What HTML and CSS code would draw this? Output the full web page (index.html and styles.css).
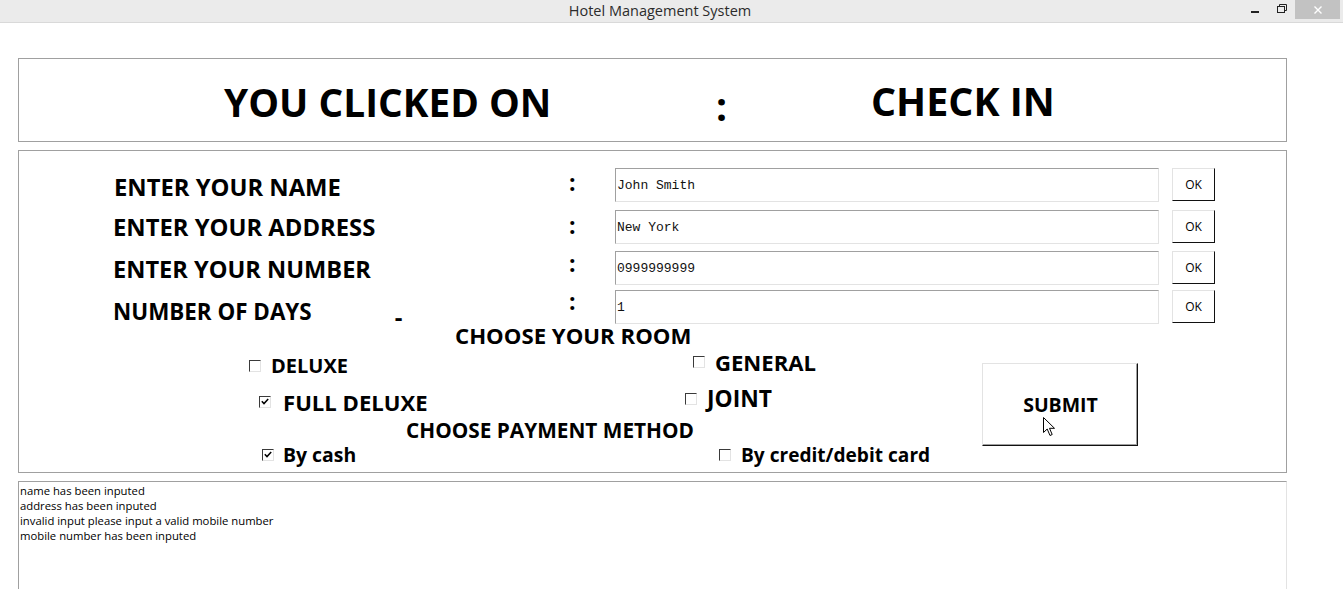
FILE: index.html
```html
<!DOCTYPE html>
<html lang="en">
<head>
<meta charset="utf-8">
<title>Hotel Management System</title>
<link rel="stylesheet" href="styles.css">
</head>
<body>
<div class="window">
  <header class="titlebar">
    <div class="title">Hotel Management System</div>
    <div class="controls">
      <span class="ctl ctl-min"><svg width="10" height="4" viewBox="0 0 10 4"><rect x="1" y="1" width="8" height="2" fill="#222"/></svg></span>
      <span class="ctl ctl-max"><svg width="12" height="11" viewBox="0 0 12 11"><rect x="1.5" y="3.5" width="7" height="6" fill="none" stroke="#222"/><path d="M3.5 3.5V1.5h7v6h-2" fill="none" stroke="#222"/></svg></span>
      <span class="ctl ctl-close"><svg width="10" height="10" viewBox="0 0 10 10"><path d="M1.5 1.5l7 7M8.5 1.5l-7 7" stroke="#fff" stroke-width="1.4"/></svg></span>
    </div>
  </header>

  <main class="content">
    <section class="banner">
      <span class="b-left">YOU CLICKED ON</span>
      <span class="b-colon">:</span>
      <span class="b-right">CHECK IN</span>
    </section>

    <section class="form">
      <div class="fields">
        <div class="field f1">
          <div class="lbl">ENTER YOUR NAME</div>
          <span class="colon">:</span>
          <div class="input">John Smith</div>
          <button class="ok">OK</button>
        </div>
        <div class="field f2">
          <div class="lbl">ENTER YOUR ADDRESS</div>
          <span class="colon">:</span>
          <div class="input">New York</div>
          <button class="ok">OK</button>
        </div>
        <div class="field f3">
          <div class="lbl">ENTER YOUR NUMBER</div>
          <span class="colon">:</span>
          <div class="input">0999999999</div>
          <button class="ok">OK</button>
        </div>
        <div class="field f4">
          <div class="lbl">NUMBER OF DAYS<span class="dash">-</span></div>
          <span class="colon">:</span>
          <div class="input">1</div>
          <button class="ok">OK</button>
        </div>
      </div>

      <div class="lower">
        <div class="choices">
          <div class="heading h-room">CHOOSE YOUR ROOM</div>
          <div class="opt-row row-a">
            <div class="opt o-deluxe"><span class="cb"></span><span class="opt-text">DELUXE</span></div>
            <div class="opt o-general"><span class="cb"></span><span class="opt-text">GENERAL</span></div>
          </div>
          <div class="opt-row row-b">
            <div class="opt o-full"><span class="cb checked"><svg width="10" height="10" viewBox="0 0 10 10"><path d="M1.8 4.2l2.2 2.4 4.2-4.6" fill="none" stroke="#000" stroke-width="1.5"/></svg></span><span class="opt-text o-gap-wide">FULL DELUXE</span></div>
            <div class="opt o-joint"><span class="cb"></span><span class="opt-text">JOINT</span></div>
          </div>
          <div class="heading h-pay">CHOOSE PAYMENT METHOD</div>
          <div class="opt-row row-pay">
            <div class="opt o-cash"><span class="cb checked"><svg width="10" height="10" viewBox="0 0 10 10"><path d="M1.8 4.2l2.2 2.4 4.2-4.6" fill="none" stroke="#000" stroke-width="1.5"/></svg></span><span class="opt-text o-gap-narrow">By cash</span></div>
            <div class="opt o-card"><span class="cb"></span><span class="opt-text">By credit/debit card</span></div>
          </div>
        </div>
        <button class="submit">SUBMIT</button>
      </div>
    </section>

    <section class="log">
      <div>name has been inputed</div>
      <div>address has been inputed</div>
      <div>invalid input please input a valid mobile number</div>
      <div>mobile number has been inputed</div>
    </section>
  </main>

  <svg class="cursor" width="13" height="20" viewBox="0 0 13 20"><path d="M0.5 0.5V15.5L4.2 12L7 18.5L9.2 17.5L6.5 11.3H11.5Z" fill="#fff" stroke="#000" stroke-width="1" stroke-linejoin="round"/></svg>
</div>
</body>
</html>
```

FILE: styles.css
```css
* { box-sizing: border-box; }
html, body { margin: 0; padding: 0; background: #fff; }
body {
  width: 1343px;
  height: 589px;
  overflow: hidden;
  font-family: "Open Sans", "Noto Sans", sans-serif;
  color: #000;
}
.window { position: relative; width: 1343px; height: 589px; }

/* title bar */
.titlebar {
  display: flex;
  height: 23px;
  background: #ebebeb;
  border-bottom: 1px solid #d9d9d9;
}
.title {
  flex: 1;
  padding-left: 79px;
  text-align: center;
  font-size: 14.5px;
  line-height: 22px;
  color: #2b2b2b;
}
.controls { display: flex; align-items: flex-start; margin-right: 3px; }
.ctl { display: flex; align-items: center; justify-content: center; height: 19px; }
.ctl-min { width: 28px; padding-top: 5px; }
.ctl-max { width: 26px; padding-bottom: 2px; }
.ctl-close { width: 45px; background: #c2c2c2; }

/* content */
.content { padding-left: 18px; }

.banner {
  margin-top: 35px;
  width: 1269px;
  height: 84px;
  border: 1px solid #a0a0a0;
  display: grid;
  grid-template-columns: 205px 494px 153px auto;
  align-items: start;
  font-weight: 700;
  font-size: 38.8px;
  line-height: 46px;
}
.b-left { grid-column: 2; margin-top: 20px; }
.b-colon { grid-column: 3; margin-top: 24px; margin-left: -2px; }
.b-right { grid-column: 4; margin-top: 19px; font-size: 39.4px; }

.form {
  margin-top: 8px;
  width: 1269px;
  height: 323px;
  border: 1px solid #a0a0a0;
}
.fields { padding-top: 17px; }
.field {
  display: grid;
  grid-template-columns: 456px 46px 544px 56px;
  padding-left: 94px;
  height: 34px;
  align-items: start;
}
.field .ok { margin-left: 13px; }
.f2 { margin-top: 8px; }
.f3 { margin-top: 7px; }
.f4 { margin-top: 5px; }

.lbl {
  font-weight: 700;
  font-size: 23.8px;
  line-height: 34px;
  white-space: nowrap;
  display: flex;
  align-items: flex-start;
}
.f1 .lbl { margin-top: 2px; padding-left: 1px; }
.f3 .lbl { margin-top: 1px; font-size: 23.6px; }
.f4 .lbl { margin-top: 5px; padding-left: 0; font-size: 22.4px; }
.dash { margin-left: 83px; margin-top: 5px; line-height: 34px; font-size: 23.8px; }

.colon {
  font-weight: 700;
  font-size: 23px;
  line-height: 28px;
}
.f2 .colon { margin-top: 1px; }
.f3 .colon { margin-top: -2px; }
.f4 .colon { margin-top: -3px; }

.input {
  height: 34px;
  border: 1px solid;
  border-color: #a0a0a0 #e3e3e3 #e3e3e3 #a0a0a0;
  padding-left: 1px;
  padding-top: 1px;
  font-family: "Liberation Mono", "Courier New", monospace;
  font-size: 13px;
  line-height: 32px;
  color: #111;
}
.ok {
  width: 43px;
  height: 33px;
  padding: 0;
  background: #fff;
  border: 1px solid;
  border-color: #e3e3e3 #111 #111 #e3e3e3;
  font-family: "Open Sans", "Noto Sans", sans-serif;
  font-size: 12px;
  color: #000;
}

.lower { display: flex; align-items: flex-start; }
.choices { width: 963px; }
.heading {
  font-weight: 700;
  line-height: 24px;
  white-space: nowrap;
}
.h-room { padding-left: 436px; font-size: 22.2px; }
.h-pay { padding-left: 387px; margin-top: 4px; font-size: 20.8px; }

.opt-row { display: grid; align-items: start; }
.row-a { padding-left: 230px; grid-template-columns: 444px auto; }
.row-b { padding-left: 240px; grid-template-columns: 426px auto; margin-top: 8px; }
.row-pay { padding-left: 243px; grid-template-columns: 457px auto; }

.opt {
  display: flex;
  align-items: center;
  height: 24px;
  font-weight: 700;
  font-size: 21px;
  line-height: 24px;
  white-space: nowrap;
}
.opt-text { margin-left: 10px; }
.o-gap-wide { margin-left: 12px; }
.o-gap-narrow { margin-left: 9px; }
.o-deluxe { margin-top: 6px; font-size: 20px; }
.o-general { margin-top: 2px; font-size: 22.1px; }
.o-full { margin-top: 4px; font-size: 22.1px; }
.o-joint { margin-top: 1px; font-size: 22.8px; }
.o-cash { margin-top: 1px; font-size: 19.4px; }
.o-card { margin-top: 1px; font-size: 19.1px; }

.cb {
  width: 12px;
  height: 12px;
  flex: none;
  border: 1px solid;
  border-color: #3a3a3a #e3e3e3 #e3e3e3 #3a3a3a;
  background: #fff;
  display: flex;
  align-items: center;
  justify-content: center;
}
.cb svg { display: block; }

.submit {
  margin-top: 39px;
  width: 156px;
  height: 83px;
  padding: 0 0 0 1px;
  background: #fff;
  border: 1px solid;
  border-color: #e3e3e3 #111 #111 #e3e3e3;
  box-shadow: inset -1px -1px 0 #a0a0a0;
  font-family: "Open Sans", "Noto Sans", sans-serif;
  font-weight: 700;
  font-size: 19.5px;
  color: #000;
}

.log {
  margin-top: 8px;
  width: 1269px;
  height: 120px;
  border: 1px solid;
  border-color: #a0a0a0 #e3e3e3 #e3e3e3 #a0a0a0;
  padding: 1px 1px;
  font-size: 11.3px;
  line-height: 15px;
  color: #000;
}

.cursor { position: absolute; left: 1043px; top: 417px; }
```
